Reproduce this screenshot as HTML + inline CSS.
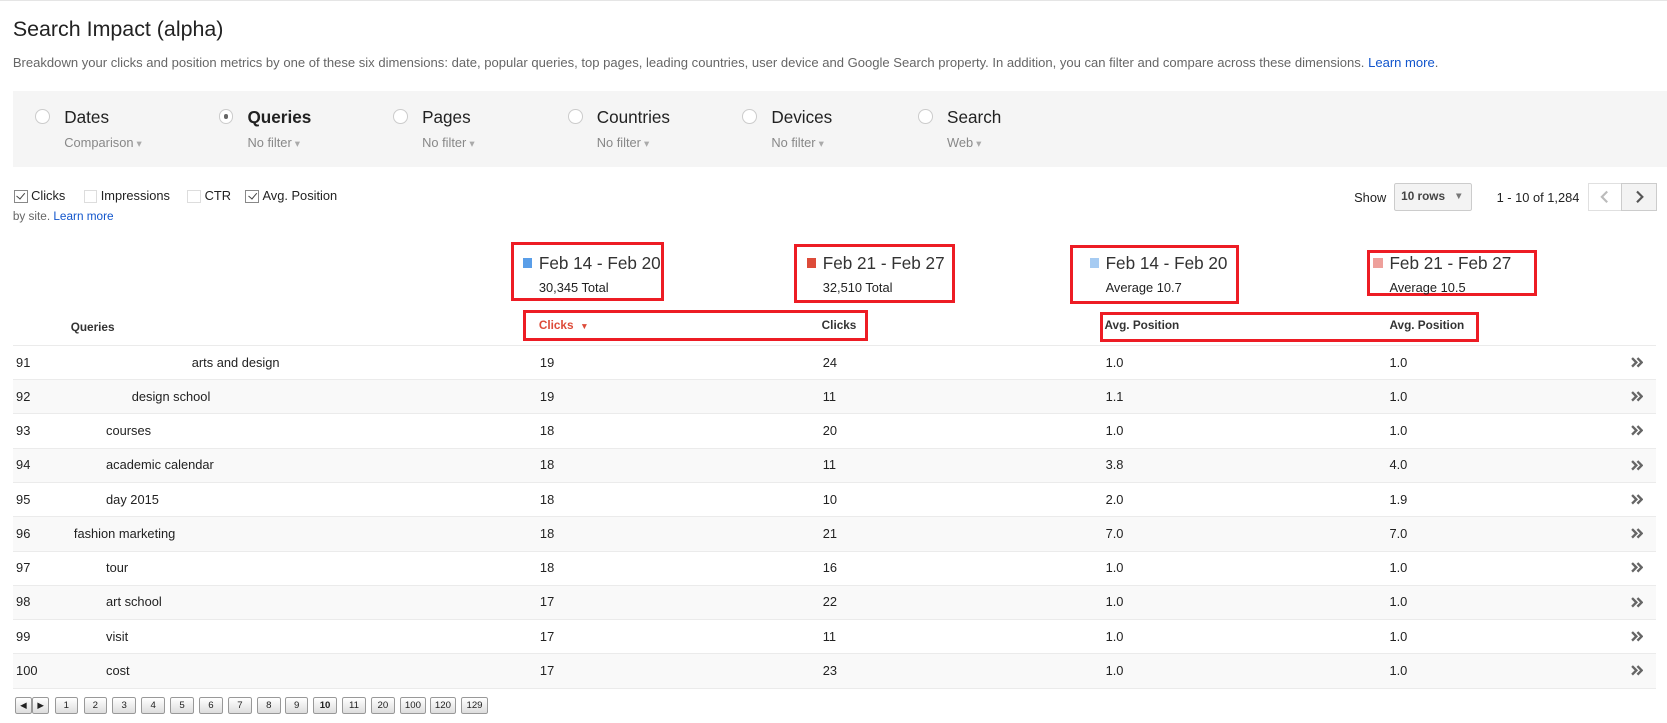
<!DOCTYPE html>
<html><head><meta charset="utf-8"><style>
html,body{margin:0;padding:0;background:#fff;overflow:hidden}
body{width:1667px;height:723px}
#w{zoom:1.0713;position:relative;width:1556px;height:675px;font-family:"Liberation Sans",Arial,sans-serif;color:#222;border-top:1px solid #e5e5e5;box-sizing:border-box}
.a{position:absolute;white-space:nowrap}
.t{left:12px;top:15px;font-size:20px;color:#222}
.d{left:12px;top:50px;font-size:12.2px;color:#666}
.d a,.lk{color:#15c;text-decoration:none}
.panel{left:12px;top:84px;width:1544px;height:71px;background:#f5f5f5}
.rad{width:12px;height:12px;border:1px solid #ccc;border-radius:50%;background:#fff;position:absolute}
.rad.on:after{content:"";position:absolute;left:4px;top:4px;width:4px;height:4px;border-radius:50%;background:#666}
.lab{font-size:16px;color:#222}
.sub{font-size:12px;color:#888}
.sub:after{content:" \25BE";font-size:10px;color:#aaa}
.cb{width:11px;height:11px;border:1px solid #ddd;background:#fff;position:absolute;top:176px}
.cb.on{border-color:#888}
.cb.on:after{content:"";position:absolute;left:3px;top:0px;width:4px;height:7px;border:solid #444;border-width:0 1.5px 1.5px 0;transform:rotate(40deg)}
.ck{font-size:12px;top:175px}
.box{position:absolute;border:3px solid #ed1c24;box-sizing:border-box}
.sq{position:absolute;width:9px;height:9px}
.ti{font-size:16px;color:#333}
.st{font-size:12px;color:#222}
.hd{font-size:11px;font-weight:bold;color:#333}
.row{position:absolute;left:12px;width:1534px;height:31px;border-bottom:1px solid #ebebeb;font-size:12px}
.row.g{background:#f9f9f9}
.row span{position:absolute;top:8px}
.chev{position:absolute;left:1510px;top:10px}
.pb{position:absolute;top:650px;height:14px;border:1px solid #999;border-radius:2px;background:linear-gradient(#fff,#ddd);font-size:9px;text-align:center;line-height:14px;box-sizing:content-box}
</style></head><body><div id="w">
<div class="a t">Search Impact (alpha)</div>
<div class="a d">Breakdown your clicks and position metrics by one of these six dimensions: date, popular queries, top pages, leading countries, user device and Google Search property. In addition, you can filter and compare across these dimensions. <a>Learn more</a>.</div>
<div class="a panel"></div>
<div class="rad" style="left:33px;top:101px"></div><div class="a lab" style="left:60px;top:99px">Dates</div><div class="a sub" style="left:60px;top:125px">Comparison</div>
<div class="rad on" style="left:204px;top:101px"></div><div class="a lab" style="left:231px;top:99px;font-weight:bold">Queries</div><div class="a sub" style="left:231px;top:125px">No filter</div>
<div class="rad" style="left:367px;top:101px"></div><div class="a lab" style="left:394px;top:99px">Pages</div><div class="a sub" style="left:394px;top:125px">No filter</div>
<div class="rad" style="left:530px;top:101px"></div><div class="a lab" style="left:557px;top:99px">Countries</div><div class="a sub" style="left:557px;top:125px">No filter</div>
<div class="rad" style="left:693px;top:101px"></div><div class="a lab" style="left:720px;top:99px">Devices</div><div class="a sub" style="left:720px;top:125px">No filter</div>
<div class="rad" style="left:857px;top:101px"></div><div class="a lab" style="left:884px;top:99px">Search</div><div class="a sub" style="left:884px;top:125px">Web</div>

<div class="cb on" style="left:13px"></div><div class="a ck" style="left:29px">Clicks</div>
<div class="cb" style="left:78px"></div><div class="a ck" style="left:94px">Impressions</div>
<div class="cb" style="left:175px"></div><div class="a ck" style="left:191px">CTR</div>
<div class="cb on" style="left:229px"></div><div class="a ck" style="left:245px">Avg. Position</div>
<div class="a" style="left:12px;top:195px;font-size:11px;color:#666">by site. <span class="lk">Learn more</span></div>

<div class="a" style="left:1264px;top:176px;font-size:12px">Show</div>
<div class="a" style="left:1301px;top:170px;width:73px;height:26px;border:1px solid #ccc;background:#f3f3f3;border-radius:2px;box-sizing:border-box;font-size:11px;font-weight:bold;line-height:24px;padding-left:6px;color:#444">10 rows<span style="position:absolute;right:7px;color:#777;font-size:9px;font-weight:normal">&#9660;</span></div>
<div class="a" style="left:1397px;top:176px;font-size:12px">1 - 10 of 1,284</div>
<div class="a" style="left:1482px;top:170px;width:32px;height:26px;border:1px solid #e0e0e0;box-sizing:border-box;background:#fff"><svg width="30" height="24"><path d="M17 7 L12 12 L17 17" fill="none" stroke="#bbb" stroke-width="2"/></svg></div>
<div class="a" style="left:1513px;top:170px;width:34px;height:26px;border:1px solid #ccc;box-sizing:border-box;background:#f3f3f3"><svg width="32" height="24"><path d="M14 7 L19 12 L14 17" fill="none" stroke="#555" stroke-width="2"/></svg></div>

<div class="box" style="left:477px;top:225px;width:143px;height:55px"></div>
<div class="sq" style="left:488px;top:240px;background:#5a9ee8"></div><div class="a ti" style="left:503px;top:235px">Feb 14 - Feb 20</div><div class="a st" style="left:503px;top:260px">30,345 Total</div>
<div class="box" style="left:741px;top:227px;width:150px;height:55px"></div>
<div class="sq" style="left:753px;top:240px;background:#dd4b39"></div><div class="a ti" style="left:768px;top:235px">Feb 21 - Feb 27</div><div class="a st" style="left:768px;top:260px">32,510 Total</div>
<div class="box" style="left:999px;top:228px;width:158px;height:55px"></div>
<div class="sq" style="left:1017px;top:240px;background:#a6cbf2"></div><div class="a ti" style="left:1032px;top:235px">Feb 14 - Feb 20</div><div class="a st" style="left:1032px;top:260px">Average 10.7</div>
<div class="box" style="left:1276px;top:232px;width:159px;height:43px"></div>
<div class="sq" style="left:1282px;top:240px;background:#eea09b"></div><div class="a ti" style="left:1297px;top:235px">Feb 21 - Feb 27</div><div class="a st" style="left:1297px;top:260px">Average 10.5</div>

<div class="box" style="left:488px;top:288px;width:322px;height:29px"></div>
<div class="box" style="left:1027px;top:290px;width:354px;height:28px"></div>
<div class="a hd" style="left:66px;top:299px">Queries</div>
<div class="a hd" style="left:503px;top:297px;color:#dd4b39">Clicks &nbsp;<span style="font-size:8px">&#9660;</span></div>
<div class="a hd" style="left:767px;top:297px">Clicks</div>
<div class="a hd" style="left:1031px;top:297px">Avg. Position</div>
<div class="a hd" style="left:1297px;top:297px">Avg. Position</div>
<div class="a" style="left:12px;top:321px;width:1534px;height:1px;background:#ebebeb"></div>

<svg width="0" height="0" style="position:absolute"><defs><g id="cv"><path d="M1 1 L5 5 L1 9 M6 1 L10 5 L6 9" fill="none" stroke="#666" stroke-width="2.2"/></g></defs></svg>
<div class="row" style="top:322px"><span style="left:3px">91</span><span style="left:167px">arts and design</span><span style="left:492px">19</span><span style="left:756px">24</span><span style="left:1020px">1.0</span><span style="left:1285px">1.0</span><svg class="chev" width="12" height="11"><use href="#cv"/></svg></div>
<div class="row g" style="top:354px"><span style="left:3px">92</span><span style="left:111px">design school</span><span style="left:492px">19</span><span style="left:756px">11</span><span style="left:1020px">1.1</span><span style="left:1285px">1.0</span><svg class="chev" width="12" height="11"><use href="#cv"/></svg></div>
<div class="row" style="top:386px"><span style="left:3px">93</span><span style="left:87px">courses</span><span style="left:492px">18</span><span style="left:756px">20</span><span style="left:1020px">1.0</span><span style="left:1285px">1.0</span><svg class="chev" width="12" height="11"><use href="#cv"/></svg></div>
<div class="row g" style="top:418px"><span style="left:3px">94</span><span style="left:87px">academic calendar</span><span style="left:492px">18</span><span style="left:756px">11</span><span style="left:1020px">3.8</span><span style="left:1285px">4.0</span><svg class="chev" width="12" height="11"><use href="#cv"/></svg></div>
<div class="row" style="top:450px"><span style="left:3px">95</span><span style="left:87px">day 2015</span><span style="left:492px">18</span><span style="left:756px">10</span><span style="left:1020px">2.0</span><span style="left:1285px">1.9</span><svg class="chev" width="12" height="11"><use href="#cv"/></svg></div>
<div class="row g" style="top:482px"><span style="left:3px">96</span><span style="left:57px">fashion marketing</span><span style="left:492px">18</span><span style="left:756px">21</span><span style="left:1020px">7.0</span><span style="left:1285px">7.0</span><svg class="chev" width="12" height="11"><use href="#cv"/></svg></div>
<div class="row" style="top:514px"><span style="left:3px">97</span><span style="left:87px">tour</span><span style="left:492px">18</span><span style="left:756px">16</span><span style="left:1020px">1.0</span><span style="left:1285px">1.0</span><svg class="chev" width="12" height="11"><use href="#cv"/></svg></div>
<div class="row g" style="top:546px"><span style="left:3px">98</span><span style="left:87px">art school</span><span style="left:492px">17</span><span style="left:756px">22</span><span style="left:1020px">1.0</span><span style="left:1285px">1.0</span><svg class="chev" width="12" height="11"><use href="#cv"/></svg></div>
<div class="row" style="top:578px"><span style="left:3px">99</span><span style="left:87px">visit</span><span style="left:492px">17</span><span style="left:756px">11</span><span style="left:1020px">1.0</span><span style="left:1285px">1.0</span><svg class="chev" width="12" height="11"><use href="#cv"/></svg></div>
<div class="row g" style="top:610px"><span style="left:3px">100</span><span style="left:87px">cost</span><span style="left:492px">17</span><span style="left:756px">23</span><span style="left:1020px">1.0</span><span style="left:1285px">1.0</span><svg class="chev" width="12" height="11"><use href="#cv"/></svg></div>

<div class="pb" style="left:14px;width:14px;font-size:8px">&#9664;</div>
<div class="pb" style="left:30px;width:14px;font-size:8px">&#9654;</div>
<div class="pb" style="left:51px;width:20px">1</div>
<div class="pb" style="left:78px;width:20px">2</div>
<div class="pb" style="left:105px;width:20px">3</div>
<div class="pb" style="left:132px;width:20px">4</div>
<div class="pb" style="left:159px;width:20px">5</div>
<div class="pb" style="left:186px;width:20px">6</div>
<div class="pb" style="left:213px;width:20px">7</div>
<div class="pb" style="left:240px;width:20px">8</div>
<div class="pb" style="left:266px;width:20px">9</div>
<div class="pb" style="left:292px;width:21px;font-weight:bold">10</div>
<div class="pb" style="left:319px;width:21px">11</div>
<div class="pb" style="left:346px;width:21px">20</div>
<div class="pb" style="left:373px;width:23px">100</div>
<div class="pb" style="left:401px;width:23px">120</div>
<div class="pb" style="left:430px;width:24px">129</div>
</div></body></html>
